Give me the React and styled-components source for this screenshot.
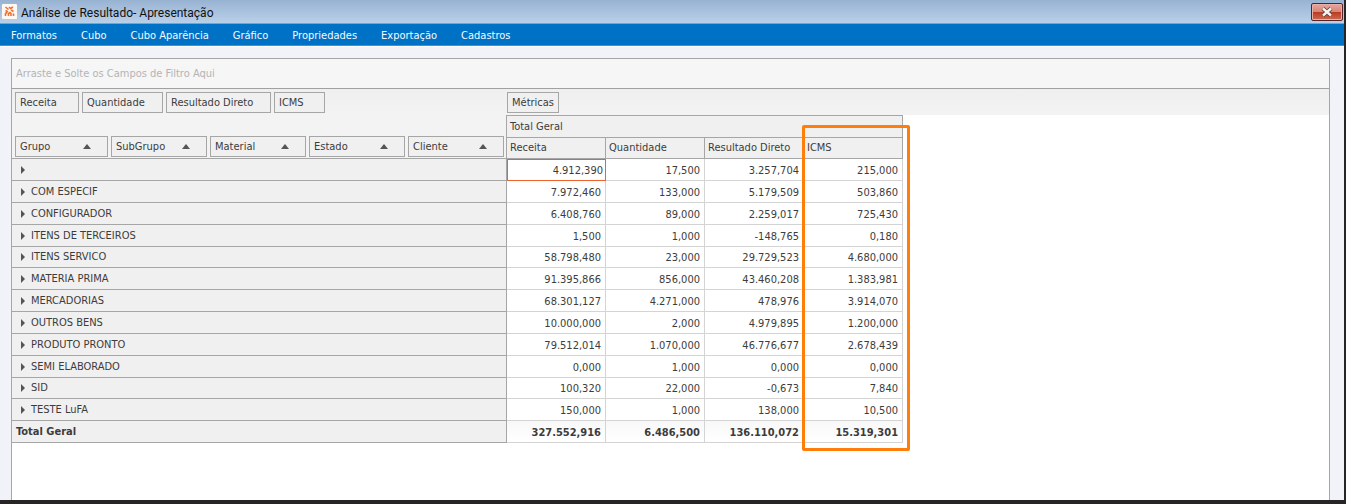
import React, { useState } from 'react';
import styled, { createGlobalStyle } from 'styled-components';

const menus = ['Formatos', 'Cubo', 'Cubo Aparência', 'Gráfico', 'Propriedades', 'Exportação', 'Cadastros'];

const camposDados = [
  { nome: 'Receita', largura: 64 },
  { nome: 'Quantidade', largura: 81 },
  { nome: 'Resultado Direto', largura: 105 },
  { nome: 'ICMS', largura: 51 },
];

const camposLinha = ['Grupo', 'SubGrupo', 'Material', 'Estado', 'Cliente'];

const colunas = ['Receita', 'Quantidade', 'Resultado Direto', 'ICMS'];

const linhas = [
  { grupo: '', valores: ['4.912,390', '17,500', '3.257,704', '215,000'] },
  { grupo: 'COM ESPECIF', valores: ['7.972,460', '133,000', '5.179,509', '503,860'] },
  { grupo: 'CONFIGURADOR', valores: ['6.408,760', '89,000', '2.259,017', '725,430'] },
  { grupo: 'ITENS DE TERCEIROS', valores: ['1,500', '1,000', '-148,765', '0,180'] },
  { grupo: 'ITENS SERVICO', valores: ['58.798,480', '23,000', '29.729,523', '4.680,000'] },
  { grupo: 'MATERIA PRIMA', valores: ['91.395,866', '856,000', '43.460,208', '1.383,981'] },
  { grupo: 'MERCADORIAS', valores: ['68.301,127', '4.271,000', '478,976', '3.914,070'] },
  { grupo: 'OUTROS BENS', valores: ['10.000,000', '2,000', '4.979,895', '1.200,000'] },
  { grupo: 'PRODUTO PRONTO', valores: ['79.512,014', '1.070,000', '46.776,677', '2.678,439'] },
  { grupo: 'SEMI ELABORADO', valores: ['0,000', '1,000', '0,000', '0,000'] },
  { grupo: 'SID', valores: ['100,320', '22,000', '-0,673', '7,840'] },
  { grupo: 'TESTE LuFA', valores: ['150,000', '1,000', '138,000', '10,500'] },
];

const totais = ['327.552,916', '6.486,500', '136.110,072', '15.319,301'];

export default function App() {
  const [celula, setCelula] = useState('0-0');

  return (
    <>
      <GlobalStyle />
      <Window>
        <TitleBar>
          <Logo viewBox="0 0 15 15" aria-hidden="true">
            <rect width="15" height="15" rx="1" fill="#fdf8f4" />
            <path
              d="M3.500 3l3 2.500M7 3l1.500 1.500L11 3M3.500 6.500l2.500 1.500M9 6l2.500 1.500M3.500 12V9.500l1.500-1M6.500 12V9.500l1.500-1L9 9.500V12M11.500 12V9.500"
              fill="none"
              stroke="#f0702c"
              strokeWidth="1.600"
            />
          </Logo>
          <Title>Análise de Resultado- Apresentação</Title>
          <CloseButton type="button" aria-label="Fechar">
            <svg width="12" height="10" viewBox="0 0 12 10" aria-hidden="true">
              <path d="M2 1.500l8 7M10 1.500l-8 7" stroke="#5b3b3b" strokeWidth="4" />
              <path d="M2 1.500l8 7M10 1.500l-8 7" stroke="#f4f4f4" strokeWidth="2.400" />
            </svg>
          </CloseButton>
        </TitleBar>
        <MenuBar>
          {menus.map((menu) => (
            <MenuItem key={menu} type="button">{menu}</MenuItem>
          ))}
        </MenuBar>
        <Body>
          <Panel>
            <FilterArea>Arraste e Solte os Campos de Filtro Aqui</FilterArea>
            <FieldBar>
              <DataFields>
                {camposDados.map((campo) => (
                  <Field key={campo.nome} type="button" $width={campo.largura}>{campo.nome}</Field>
                ))}
              </DataFields>
              <Field type="button" $width={52}>Métricas</Field>
            </FieldBar>
            <Pivot>
              <Table>
                <colgroup>
                  <GroupCol />
                  {colunas.map((coluna) => <ValueCol key={coluna} />)}
                </colgroup>
                <thead>
                  <tr>
                    <RowFieldsCell rowSpan={2}>
                      <RowFields>
                        {camposLinha.map((campo) => (
                          <Field key={campo} type="button">
                            {campo}
                            <SortIcon viewBox="0 0 8 5" aria-hidden="true">
                              <path d="M0 5L4 0l4 5z" fill="#555" />
                            </SortIcon>
                          </Field>
                        ))}
                      </RowFields>
                    </RowFieldsCell>
                    <HeadCell colSpan={4} $top>Total Geral</HeadCell>
                  </tr>
                  <tr>
                    {colunas.map((coluna) => <HeadCell key={coluna}>{coluna}</HeadCell>)}
                  </tr>
                </thead>
                <tbody>
                  {linhas.map((linha, i) => (
                    <Row key={i}>
                      <GroupCell scope="row">
                        <Expand type="button" aria-label="Expandir">
                          <svg width="4" height="8" viewBox="0 0 4 8" aria-hidden="true">
                            <path d="M0 0l4 4-4 4z" fill="#555" />
                          </svg>
                        </Expand>
                        {linha.grupo}
                      </GroupCell>
                      {linha.valores.map((valor, j) => (
                        <ValueCell
                          key={j}
                          $focused={celula === `${i}-${j}`}
                          onClick={() => setCelula(`${i}-${j}`)}
                        >
                          {valor}
                        </ValueCell>
                      ))}
                    </Row>
                  ))}
                </tbody>
                <tfoot>
                  <Row>
                    <TotalLabel scope="row">Total Geral</TotalLabel>
                    {totais.map((total) => <TotalCell key={total}>{total}</TotalCell>)}
                  </Row>
                </tfoot>
              </Table>
              <Highlight />
            </Pivot>
          </Panel>
        </Body>
      </Window>
    </>
  );
}

const GlobalStyle = createGlobalStyle`
  * {
    box-sizing: border-box;
  }

  body {
    margin: 0;
  }

  body, button {
    font-family: 'DejaVu Sans Condensed', 'Noto Sans', sans-serif;
    font-size: 11px;
    color: #3c3c3c;
  }
`;

const Window = styled.div`
  display: flex;
  flex-direction: column;
  min-height: 100vh;
  background: #f2f3f9;
  border-right: 2px solid #262424;
  border-bottom: 4px solid #262424;
`;

const TitleBar = styled.header`
  display: flex;
  align-items: center;
  gap: 4px;
  height: 24px;
  padding: 0 1px 0 2px;
  background: linear-gradient(#98b3d2, #b9d0e9);
  border-bottom: 1px solid #6fa6da;
`;

const Logo = styled.svg`
  width: 15px;
  height: 15px;
`;

const Title = styled.h1`
  flex: 1;
  margin: 0;
  padding-top: 2px;
  font-family: Roboto, sans-serif;
  font-size: 12px;
  font-weight: normal;
  line-height: 16px;
  color: #111;
`;

const CloseButton = styled.button`
  display: flex;
  align-items: center;
  justify-content: center;
  width: 32px;
  height: 18px;
  padding: 0;
  background: linear-gradient(#e6a79c 0%, #d98478 48%, #b83a22 50%, #cf6a52 100%);
  border: 1px solid #55242a;
  border-radius: 2px;
  box-shadow: inset 0 0 0 1px #e8b0a5;
`;

const MenuBar = styled.nav`
  display: flex;
  gap: 24px;
  height: 22px;
  padding: 2px 11px 0;
  background: #0072c6;
  border-bottom: 1px solid #3c94d8;
`;

const MenuItem = styled.button`
  padding: 0;
  background: none;
  border: none;
  color: #f4f9ff;
`;

const Body = styled.main`
  display: flex;
  flex: 1;
  padding: 11px 14px 0 11px;
  border-top: 1px solid #fff;
`;

const Panel = styled.section`
  flex: 1;
  background: #fff;
  border: 1px solid #a6a6a6;
  border-bottom: none;
`;

const FilterArea = styled.div`
  display: flex;
  align-items: center;
  height: 30px;
  padding: 0 4px;
  background: #f6f6f6;
  border-bottom: 1px solid #a0a0a0;
  color: #b4b4b4;
`;

const FieldBar = styled.div`
  display: flex;
  height: 26px;
  padding-top: 3px;
  background: linear-gradient(#efefef, #f3f3f3);
`;

const DataFields = styled.div`
  display: flex;
  gap: 3px;
  width: 495px;
  padding-left: 3px;
`;

const Field = styled.button`
  display: flex;
  align-items: center;
  justify-content: space-between;
  width: ${({ $width }) => ($width ? `${$width}px` : 'auto')};
  height: 21px;
  padding: 0 4px;
  background: #f0f0f0;
  border: 1px solid #a6a6a6;
  white-space: nowrap;
`;

const Pivot = styled.div`
  position: relative;
  width: fit-content;
`;

const Table = styled.table`
  width: 891px;
  table-layout: fixed;
  border-collapse: separate;
  border-spacing: 0;
  line-height: 14px;
`;

const GroupCol = styled.col`
  width: 495px;
`;

const ValueCol = styled.col`
  width: 99px;
`;

const RowFieldsCell = styled.td`
  padding: 0 1px 1px 3px;
  vertical-align: bottom;
  background: #f3f3f3;
  border-right: 1px solid #a6a6a6;
  border-bottom: 1px solid #a6a6a6;
`;

const RowFields = styled.div`
  display: grid;
  grid-template-columns: 93px repeat(4, 96px);
  gap: 3px;
`;

const SortIcon = styled.svg`
  width: 8px;
  height: 5px;
  margin-right: 12px;
`;

const HeadCell = styled.th`
  height: ${({ $top }) => ($top ? '23px' : '21px')};
  padding: 0 3px;
  text-align: left;
  font-weight: normal;
  background: #f0f0f0;
  border-top: ${({ $top }) => ($top ? '1px solid #a6a6a6' : 'none')};
  border-right: 1px solid #a6a6a6;
  border-bottom: 1px solid #a6a6a6;
`;

const Row = styled.tr`
  height: 22px;

  &:nth-child(6n + 5) {
    height: 21px;
  }
`;

const GroupCell = styled.th`
  padding: 0 8px;
  text-align: left;
  font-weight: normal;
  background: #f0f0f0;
  border-right: 1px solid #a6a6a6;
  border-bottom: 1px solid #a6a6a6;
`;

const Expand = styled.button`
  width: 11px;
  height: 14px;
  padding: 0;
  background: none;
  border: none;
  text-align: left;
  vertical-align: top;

  svg {
    display: block;
    margin-left: 1px;
  }
`;

const ValueCell = styled.td`
  padding: 2px ${({ $focused }) => ($focused ? '2px' : '4px')} 0;
  text-align: right;
  border: solid ${({ $focused }) => ($focused ? '#f0622d' : '#d4d4d4')};
  border-width: ${({ $focused }) => ($focused ? '1px' : '0 1px 1px 0')};
`;

const TotalLabel = styled(GroupCell)`
  padding: 0 4px;
  font-weight: bold;
`;

const TotalCell = styled(ValueCell)`
  font-weight: bold;
  background: linear-gradient(#f8f8f8, #fff);
`;

const Highlight = styled.div`
  position: absolute;
  top: 10px;
  right: -7px;
  bottom: -8px;
  width: 108px;
  border: 3px solid #ff7d0a;
  border-radius: 2px;
  pointer-events: none;
`;
